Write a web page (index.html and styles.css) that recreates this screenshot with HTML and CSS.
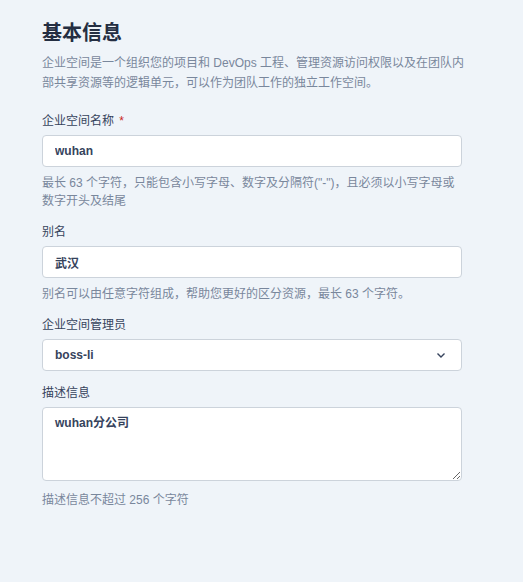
FILE: index.html
```html
<!DOCTYPE html>
<html lang="zh-CN">

<head>
    <meta charset="UTF-8" />
    <meta name="viewport" content="width=device-width, initial-scale=1.0" />
    <title>基本信息</title>
    <link rel="stylesheet" href="styles.css">
</head>

<body>
    <div class="page">
        <!-- Header -->
        <div class="intro">
            <h2 class="title">基本信息</h2>
            <p class="desc">企业空间是一个组织您的项目和 DevOps 工程、管理资源访问权限以及在团队内部共享资源等的逻辑单元，可以作为团队工作的独立工作空间。</p>
        </div>

        <!-- Form -->
        <form class="form">
            <div class="field">
                <label class="label">企业空间名称 <span class="required">*</span></label>
                <input class="input" value="wuhan" />
                <div class="hint">最长 63 个字符，只能包含小写字母、数字及分隔符("-")，且必须以小写字母或数字开头及结尾</div>
            </div>

            <div class="field">
                <label class="label">别名</label>
                <input class="input" value="武汉" />
                <div class="hint">别名可以由任意字符组成，帮助您更好的区分资源，最长 63 个字符。</div>
            </div>

            <div class="field">
                <label class="label">企业空间管理员</label>
                <div class="select">
                    <span>boss-li</span>
                    <svg class="chevron" width="12" height="12" viewBox="0 0 12 12">
                        <path d="M2.5 4.5 L6 8 L9.5 4.5" fill="none" stroke="#36435c" stroke-width="1.4" />
                    </svg>
                </div>
            </div>

            <div class="field">
                <label class="label">描述信息</label>
                <textarea class="textarea">wuhan分公司</textarea>
                <div class="hint hint-last">描述信息不超过 256 个字符</div>
            </div>
        </form>
    </div>
</body>

</html>
```

FILE: styles.css
```css
body {
    font-family: "Liberation Sans", "Noto Sans CJK SC", sans-serif;
    margin: 0;
    padding: 0;
    background: #eff4f9;
    color: #36435c;
    height: 100vh;
}

.page {
    padding: 19px 0 0 42px;
}

.intro {
    width: 428px;
}

.title {
    font-size: 20px;
    line-height: 28px;
    font-weight: bold;
    color: #242e42;
    margin: 0 0 6px;
}

.desc {
    font-size: 12px;
    line-height: 20px;
    color: #79879c;
    margin: 0 0 18px;
}

.form {
    width: 420px;
}

.field {
    display: flex;
    flex-direction: column;
    margin-bottom: 12px;
}

.label {
    font-size: 12px;
    line-height: 20px;
    color: #36435c;
    margin-bottom: 4px;
}

.required {
    color: #ca2621;
    margin-left: 2px;
}

.input,
.select,
.textarea {
    box-sizing: border-box;
    width: 100%;
    border: 1px solid #ccd3db;
    border-radius: 4px;
    background: #fff;
    font-family: "Liberation Sans", "Noto Sans CJK SC", sans-serif;
    font-size: 12px;
    font-weight: bold;
    color: #36435c;
    margin: 0;
}

.input {
    height: 32px;
    padding: 0 12px;
    outline: none;
}

.select {
    height: 32px;
    padding: 0 14px 0 12px;
    display: flex;
    align-items: center;
    justify-content: space-between;
}

.chevron {
    display: block;
}

.textarea {
    display: block;
    height: 74px;
    padding: 5px 12px;
    line-height: 20px;
    outline: none;
}

.hint {
    font-size: 12px;
    line-height: 18px;
    color: #79879c;
    margin-top: 7px;
}

.hint-last {
    margin-top: 10px;
}
```
